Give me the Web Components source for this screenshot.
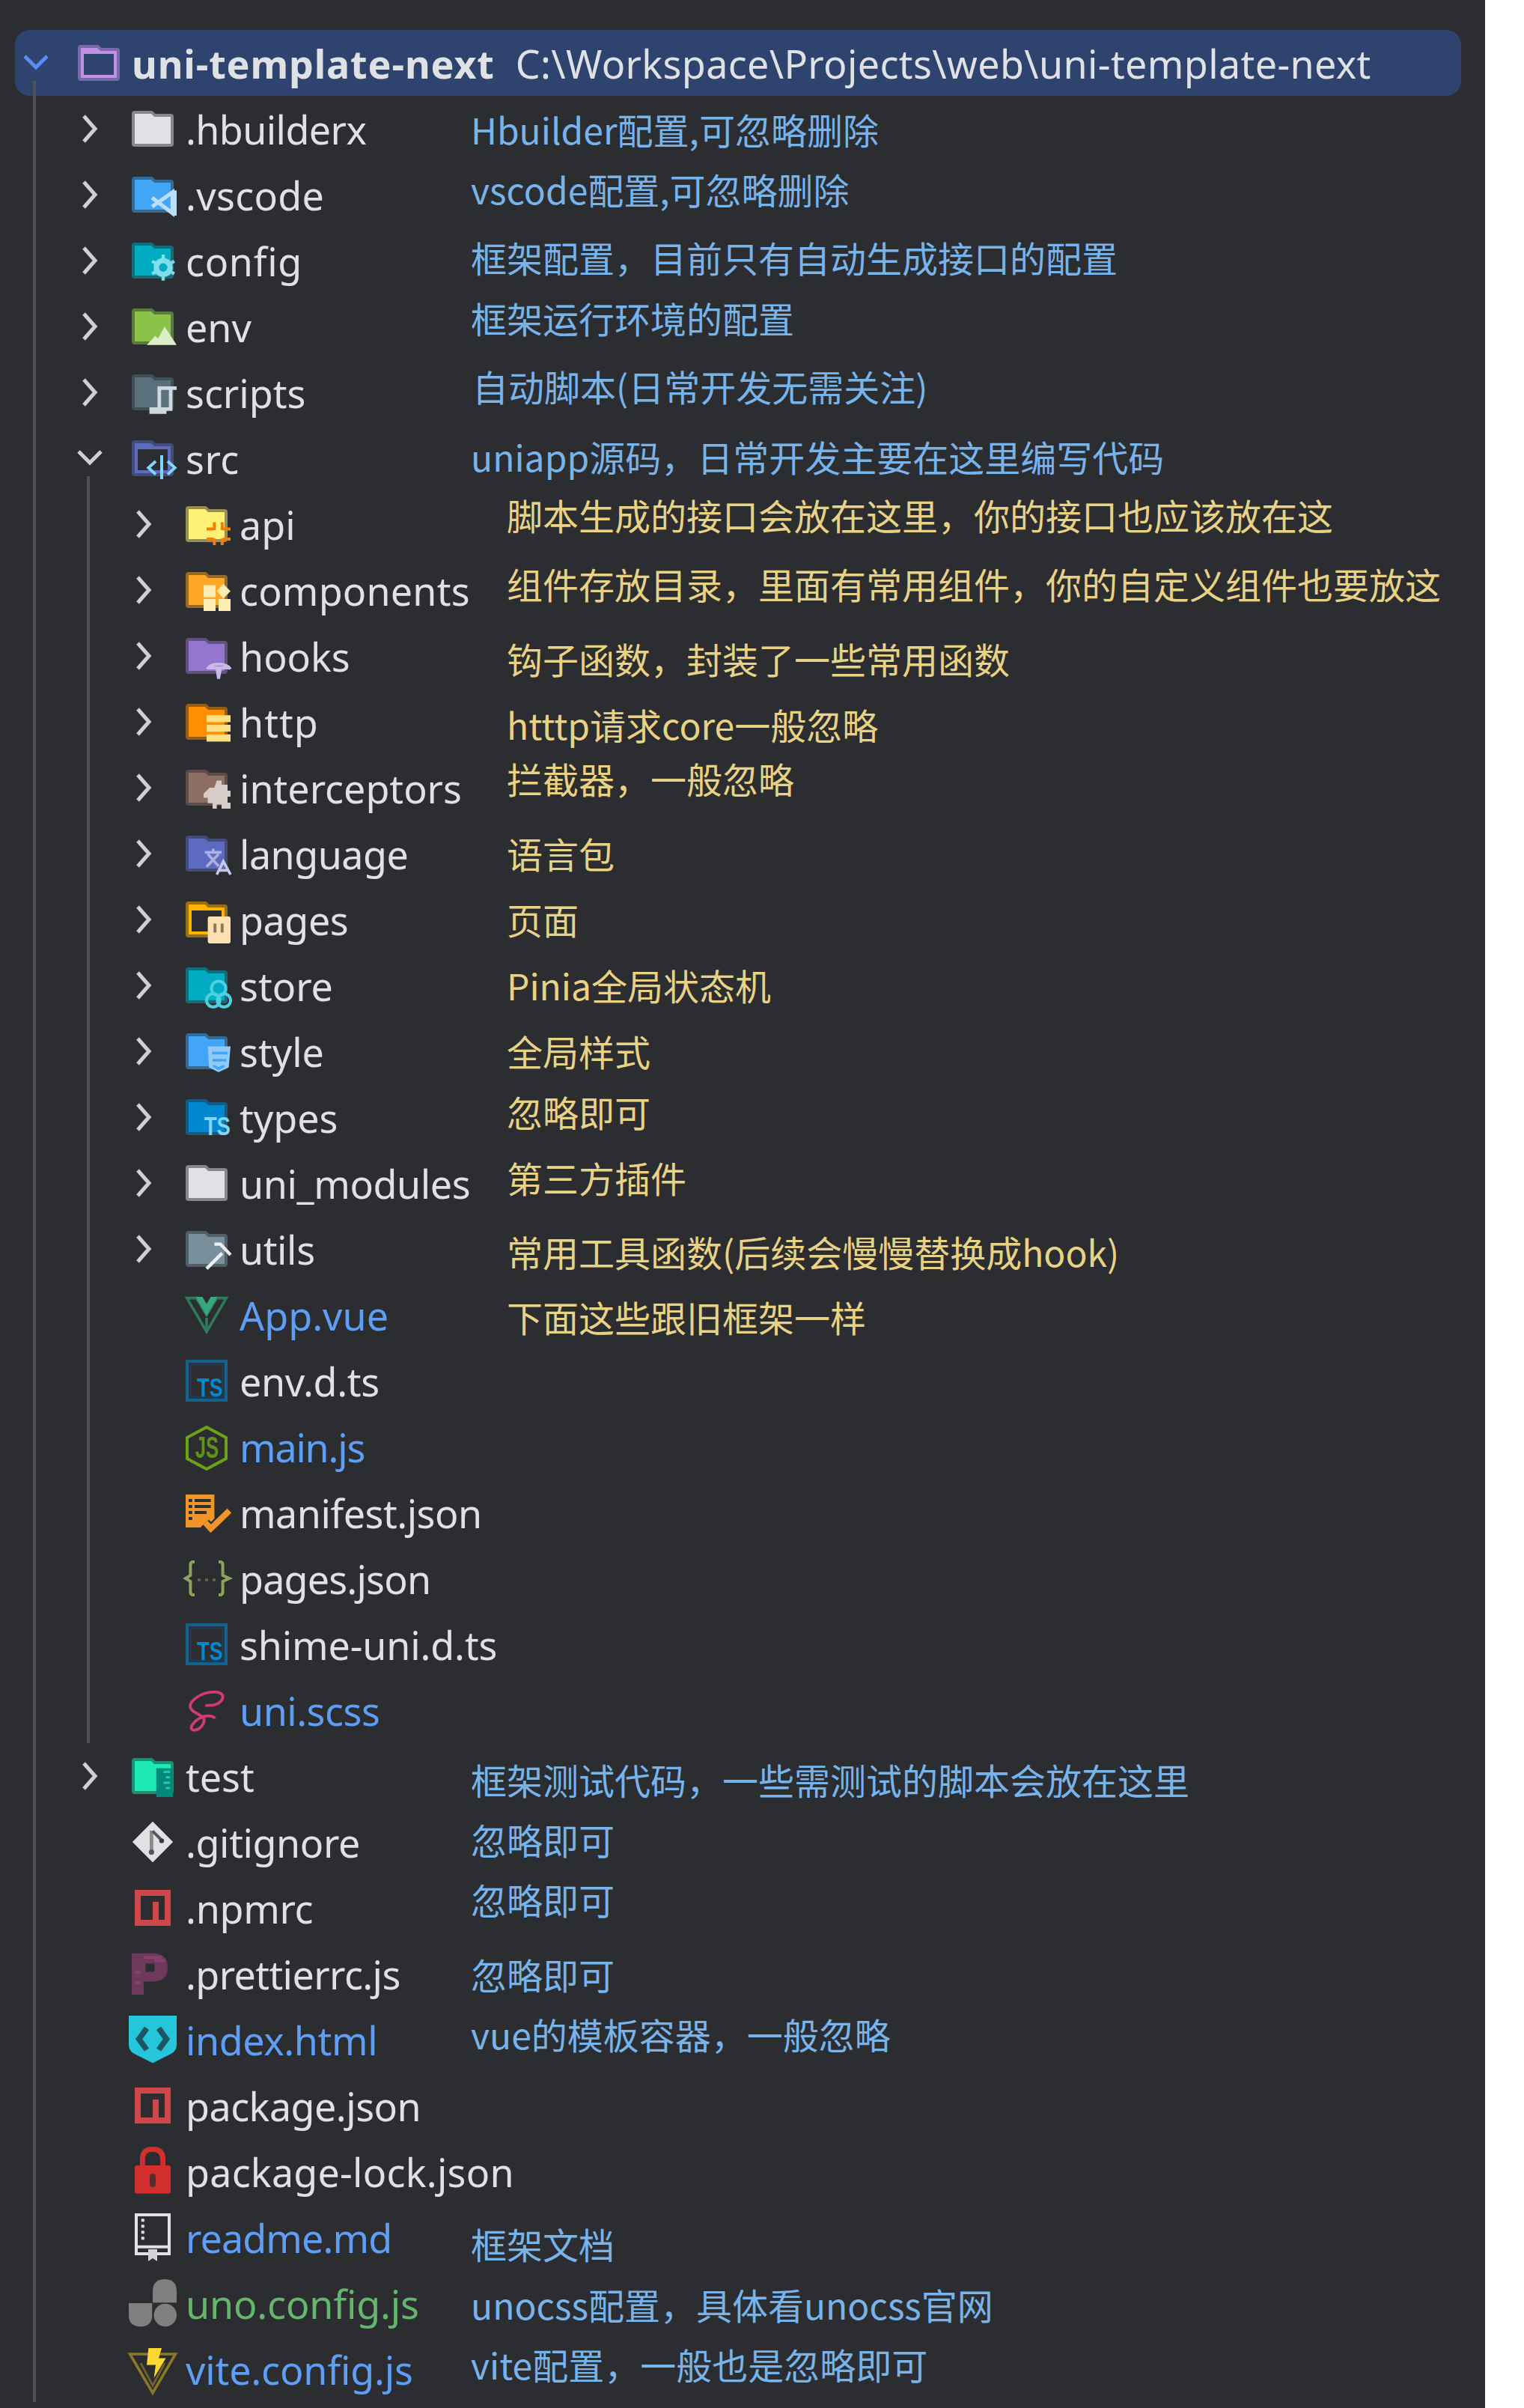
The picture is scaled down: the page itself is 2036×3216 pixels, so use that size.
<!DOCTYPE html>
<html>
<head>
<meta charset="utf-8">
<title>uni-template-next</title>
<style>
    html, body { margin: 0; background: #fff; }
</style>
</head>
<body>
<tree-panel>
    <tree-row selected level="0" chevron="open" icon="root"><b style="letter-spacing:.85px">uni-template-next</b><tree-path style="letter-spacing:.38px">C:\Workspace\Projects\web\uni-template-next</tree-path></tree-row>
    <tree-group style="--guide-x:44px">
        <tree-row level="1" chevron="closed" icon="hbuilderx" style="letter-spacing:-.6px">.hbuilderx<tree-note slot="note" x="629" dy="1">Hbuilder配置,可忽略删除</tree-note></tree-row>
        <tree-row level="1" chevron="closed" icon="vscode" style="letter-spacing:.3px">.vscode<tree-note slot="note" x="629" dy="-7">vscode配置,可忽略删除</tree-note></tree-row>
        <tree-row level="1" chevron="closed" icon="config" style="letter-spacing:.7px">config<tree-note slot="note" x="629" dy="-4">框架配置&#xFF0C;目前只有自动生成接口的配置</tree-note></tree-row>
        <tree-row level="1" chevron="closed" icon="env">env<tree-note slot="note" x="629" dy="-11">框架运行环境的配置</tree-note></tree-row>
        <tree-row level="1" chevron="closed" icon="scripts">scripts<tree-note slot="note" x="631" dy="-8">自动脚本(日常开发无需关注)</tree-note></tree-row>
        <tree-row level="1" chevron="open" icon="src" style="letter-spacing:.5px">src<tree-note slot="note" x="629" dy="-2">uniapp源码&#xFF0C;日常开发主要在这里编写代码</tree-note></tree-row>
        <tree-group style="--guide-x:116px">
            <tree-row level="2" chevron="closed" icon="api">api<tree-note slot="note" tone="yellow" x="677" dy="-12">脚本生成的接口会放在这里&#xFF0C;你的接口也应该放在这</tree-note></tree-row>
            <tree-row level="2" chevron="closed" icon="components" style="letter-spacing:.2px">components<tree-note slot="note" tone="yellow" x="677" dy="-8">组件存放目录&#xFF0C;里面有常用组件&#xFF0C;你的自定义组件也要放这</tree-note></tree-row>
            <tree-row level="2" chevron="closed" icon="hooks">hooks<tree-note slot="note" tone="yellow" x="677" dy="4">钩子函数&#xFF0C;封装了一些常用函数</tree-note></tree-row>
            <tree-row level="2" chevron="closed" icon="http" style="letter-spacing:1px">http<tree-note slot="note" tone="yellow" x="677" dy="4">htttp请求core一般忽略</tree-note></tree-row>
            <tree-row level="2" chevron="closed" icon="interceptors">interceptors<tree-note slot="note" tone="yellow" x="677" dy="-12">拦截器&#xFF0C;一般忽略</tree-note></tree-row>
            <tree-row level="2" chevron="closed" icon="language" style="letter-spacing:-.5px">language<tree-note slot="note" tone="yellow" x="677" dy="0">语言包</tree-note></tree-row>
            <tree-row level="2" chevron="closed" icon="pages" style="letter-spacing:-.4px">pages<tree-note slot="note" tone="yellow" x="677" dy="0">页面</tree-note></tree-row>
            <tree-row level="2" chevron="closed" icon="store">store<tree-note slot="note" tone="yellow" x="677" dy="0">Pinia全局状态机</tree-note></tree-row>
            <tree-row level="2" chevron="closed" icon="style">style<tree-note slot="note" tone="yellow" x="677" dy="0">全局样式</tree-note></tree-row>
            <tree-row level="2" chevron="closed" icon="types">types<tree-note slot="note" tone="yellow" x="677" dy="-7">忽略即可</tree-note></tree-row>
            <tree-row level="2" chevron="closed" icon="unimodules" style="letter-spacing:-.4px">uni_modules<tree-note slot="note" tone="yellow" x="677" dy="-7">第三方插件</tree-note></tree-row>
            <tree-row level="2" chevron="closed" icon="utils" style="letter-spacing:-.4px">utils<tree-note slot="note" tone="yellow" x="677" dy="4">常用工具函数(后续会慢慢替换成hook)</tree-note></tree-row>
            <tree-row level="2" icon="vue" status="modified">App.vue<tree-note slot="note" tone="yellow" x="677" dy="3">下面这些跟旧框架一样</tree-note></tree-row>
            <tree-row level="2" icon="ts" style="letter-spacing:-.3px">env.d.ts</tree-row>
            <tree-row level="2" icon="nodejs" status="modified" style="letter-spacing:-1.2px">main.js</tree-row>
            <tree-row level="2" icon="manifest" style="letter-spacing:-.5px">manifest.json</tree-row>
            <tree-row level="2" icon="json" style="letter-spacing:-.8px">pages.json</tree-row>
            <tree-row level="2" icon="ts" style="letter-spacing:-.15px">shime-uni.d.ts</tree-row>
            <tree-row level="2" icon="scss" status="modified" style="letter-spacing:-.5px">uni.scss</tree-row>
        </tree-group>
        <tree-row level="1" chevron="closed" icon="test">test<tree-note slot="note" x="629" dy="5">框架测试代码&#xFF0C;一些需测试的脚本会放在这里</tree-note></tree-row>
        <tree-row level="1" icon="git" style="letter-spacing:-.4px">.gitignore<tree-note slot="note" x="629" dy="-3">忽略即可</tree-note></tree-row>
        <tree-row level="1" icon="npm" style="letter-spacing:-.3px">.npmrc<tree-note slot="note" x="629" dy="-11">忽略即可</tree-note></tree-row>
        <tree-row level="1" icon="prettier" style="letter-spacing:-.6px">.prettierrc.js<tree-note slot="note" x="629" dy="1">忽略即可</tree-note></tree-row>
        <tree-row level="1" icon="html" status="modified" style="letter-spacing:-.4px">index.html<tree-note slot="note" x="629" dy="-7">vue的模板容器&#xFF0C;一般忽略</tree-note></tree-row>
        <tree-row level="1" icon="npm" style="letter-spacing:-.5px">package.json</tree-row>
        <tree-row level="1" icon="lock" style="letter-spacing:.25px">package-lock.json</tree-row>
        <tree-row level="1" icon="readme" status="modified" style="letter-spacing:-.9px">readme.md<tree-note slot="note" x="629" dy="9">框架文档</tree-note></tree-row>
        <tree-row level="1" icon="uno" status="added" style="letter-spacing:-.15px">uno.config.js<tree-note slot="note" x="629" dy="2">unocss配置&#xFF0C;具体看unocss官网</tree-note></tree-row>
        <tree-row level="1" icon="vite" status="modified" style="letter-spacing:-.15px">vite.config.js<tree-note slot="note" x="629" dy="-6">vite配置&#xFF0C;一般也是忽略即可</tree-note></tree-row>
    </tree-group>
</tree-panel>

<script>
    // folder drawn on a 14 cell grid, the rim is a half transparent stroke
    const FOLDER = 'M1 2H6.5L7.5 3H13V12H1Z';
    const folder = (c) => `<path d="${FOLDER}" fill="${c}" stroke="${c}" stroke-width="2" stroke-opacity=".5" stroke-linejoin="round"/>`;
    const hollowFolder = (c) => `<path d="${FOLDER}" fill="none" stroke="${c}" stroke-width="2" stroke-opacity=".5" stroke-linejoin="round"/>
        <path d="${FOLDER}M2 4V11H12V4Z" fill-rule="evenodd" fill="${c}"/>`;
    const SANS = 'font-family="Liberation Sans, sans-serif"';
    const tsFile = `<rect x=".5" y=".5" width="13" height="13" fill="none" stroke="#14608f"/>
        <rect x="1.5" y="1.5" width="11" height="11" fill="none" stroke="#1e3c4f" stroke-width=".7"/>
        <text x="3.8" y="12.2" ${SANS} font-weight="700" font-size="8.6" textLength="8.6" lengthAdjust="spacingAndGlyphs" fill="#0288d1">TS</text>`;
    const npm = `<path d="M1 1H13V13H1ZM3 3V11H7V5H9V11H11V3Z" fill-rule="evenodd" fill="#d0484c"/>`;

    const ICONS = {
        root: hollowFolder('#c08fe6'),
        hbuilderx: folder('#dfe1e5'),
        unimodules: folder('#dfe1e5'),
        vscode: folder('#42a5f5') + `<g fill="none" stroke="#bbdefb">
            <path d="M6.8 8L13.6 13.2V6.2L6.8 11" stroke-width="1.3"/>
            <path d="M14.2 5.6V14" stroke-width="1.6"/></g>`,
        config: folder('#00acc1') + `<circle cx="10.5" cy="9.3" r="2.3" fill="#00acc1" stroke="#80deea" stroke-width="1.8"/>
            <path d="M10.5 5V13.7M6.8 7.2L14.2 11.4M6.8 11.4L14.2 7.2" stroke="#80deea" stroke-width="1.1" stroke-dasharray="1.3 6.1"/>`,
        env: folder('#8bc34a') + `<path d="M5 13.2L7.8 10.2L8.8 11L11 7L15 13.2Z" fill="#dcedc8"/>`,
        scripts: folder('#5a717d') + `<g fill="none" stroke="#cfd8dc" stroke-width="1.2">
            <path d="M15 5.6H9.2V12.4"/><path d="M13 6V12.6H6.5V13.6H11.6"/></g>`,
        src: hollowFolder('#5c6bc0') + `<g fill="none" stroke="#81d4fa">
            <path d="M8 8L5.6 10.2L8 12.4" /><path d="M12 8L14.4 10.2L12 12.4"/><path d="M10 6V14"/></g>`,
        api: folder('#fff176') + `<path d="M7 8.6H9.4M12.4 8.6H15M7 12H9.4M12.4 12H15M9.6 6.4V9M12.2 6.4V9M9.6 11.8V14M12.2 11.8V14" stroke="#f57c00" stroke-width="1"/>`,
        components: folder('#ffa726') + `<g fill="#ffecb3">
            <rect x="6" y="5.4" width="4" height="4"/><path d="M12.6 5L15 7.4L12.6 9.8L10.4 7.4Z"/>
            <rect x="6" y="10" width="4" height="4"/><rect x="11" y="10" width="4" height="4"/></g>`,
        hooks: folder('#9575cd') + `<path d="M7.2 11.4C8.4 9.2 13.6 9.2 15 11.4M7.6 11H14.6M10.5 11.2L11 14.6L11.6 11.2" fill="none" stroke="#c9b8ea" stroke-width="1"/>`,
        http: folder('#ff8f00') + `<g fill="#ffe082"><rect x="7" y="4.8" width="8" height="2.3"/><rect x="7" y="8" width="8" height="2.3"/><rect x="7" y="11.2" width="8" height="2.4"/></g>`,
        interceptors: folder('#8d6e63') + `<path d="M10.4 4.6H12V6H14V8H15V10H14V12H15V14H12V12.6H10.4V14H9V12.2H7.4V10.4H6V9L8 7H9.6Z" fill="#d7ccc8"/>`,
        language: folder('#5c6bc0') + `<g fill="none" stroke="#aab2e2" stroke-width=".9">
            <path d="M6.4 6.6H12M9.2 5.4V6.6M7.4 7.2L11 11.2M11 7.2L7 11.4"/>
            <path d="M10.4 14L12.6 9.6L15 14M11.4 12.6H14" stroke="#c5cae9"/></g>`,
        pages: hollowFolder('#ffb300') + `<rect x="7.4" y="6" width="7.6" height="9" rx=".6" fill="#ffe0b2"/>
            <path d="M9.8 8.4V11.4M12.2 8.4V11.4" stroke="#8d7a5c" stroke-width="1"/>`,
        store: folder('#00acc1') + `<g fill="none" stroke="#4dd0e1" stroke-width="1">
            <circle cx="11" cy="8" r="2.4"/><circle cx="9.2" cy="12" r="2.2"/><circle cx="12.8" cy="12" r="2.2"/></g>`,
        style: folder('#42a5f5') + `<path d="M7.4 5.4H15L14.4 12.4L11 14L7.8 12.4Z" fill="#90caf9"/>
            <path d="M8.8 7.6H14M9 10H13.6M9.6 11.6V12L11 12.8L12.6 12V11.6" fill="none" stroke="#42a5f5" stroke-width=".9"/>`,
        types: folder('#0288d1') + `<text x="6.2" y="13" ${SANS} font-weight="700" font-size="8.8" textLength="8.8" lengthAdjust="spacingAndGlyphs" fill="#81d4fa">TS</text>`,
        utils: folder('#78909c') + `<g fill="none" stroke="#eceff1" stroke-width="1.1"><path d="M7 13.6L12.2 8.4"/><path d="M9.6 5.4H11.6L15 9"/></g>`,
        vue: `<path d="M.4 1.4H3.6L7 7L10.4 1.4H13.6L7 12.6Z" fill="none" stroke="#2f7a5c" stroke-width=".9"/>
            <path d="M3.4 1H5.6L7 3.4L8.4 1H10.6L7 7.4Z" fill="#38a97d"/><path d="M7 8V13" stroke="#2f7a5c" stroke-width=".9"/>`,
        ts: tsFile,
        nodejs: `<path d="M7 .5L13.5 4V11L7 14.5L.5 11V4Z" fill="none" stroke="#6ca214"/>
            <text x="3.2" y="10.8" ${SANS} font-weight="700" font-size="10" textLength="7.8" lengthAdjust="spacingAndGlyphs" fill="#5f9216">JS</text>`,
        manifest: `<rect x="0" y="1" width="9.6" height="11" fill="#f0952a"/>
            <path d="M1 3H2.2M3 3H8.4M1 5H2.2M3 5H8.4M1 7H2.2M3 7H7M1 9H2.2" stroke="#2b2d30"/>
            <path d="M6.4 10.6L8.4 12.8L14.4 6.8" fill="none" stroke="#2b2d30" stroke-width="3.6"/>
            <path d="M6.6 10.4L8.4 12.4L14.6 6.4" fill="none" stroke="#f0952a" stroke-width="2"/>`,
        json: `<g fill="none" stroke="#8da25a" stroke-width="1">
            <path d="M3 1.5H2.4Q1.6 1.5 1.6 2.6V6L0 7L1.6 8V11.4Q1.6 12.5 2.4 12.5H3"/>
            <path d="M11 1.5H11.6Q12.4 1.5 12.4 2.6V6L14.6 7L12.4 8V11.4Q12.4 12.5 11.6 12.5H11"/></g>
            <path d="M4 7.5H10" stroke="#5f6a48" stroke-width=".9" stroke-dasharray="1 1.5"/>`,
        scss: `<path d="M12.4 2.8C12.8 .4 7.4 .2 3.6 2.8C.8 4.8 1 6.4 3.2 7.8L6 9.4C6.8 11.6 4.4 14 2.4 13.6C1 13.2 2.4 10.6 5.8 9.2C7.6 8.6 9.4 9 9.8 9.8M12.4 2.8C12 4.8 9.6 5.6 6.6 5.4" fill="none" stroke="#d43a70" stroke-width=".95"/>`,
        test: folder('#1de9b6') + `<rect x="8.2" y="4.4" width="5.6" height="9.6" fill="#00897b"/>
            <path d="M10.6 5.6H12.8M11.4 7.4H12.8M10.6 9.2H12.8M11.4 11H12.8" stroke="#26c6a6" stroke-width=".8"/>`,
        git: `<path d="M7 .2L13.8 7L7 13.8L.2 7Z" fill="#dfe1e5"/>
            <path d="M6.6 3.2V11" stroke="#8a8a8a" stroke-width="1.2"/><path d="M7 3.4L9.8 6.2" stroke="#55575b" stroke-width="1"/>
            <circle cx="10" cy="6.6" r=".8" fill="#3a3c40"/><circle cx="6.6" cy="10.4" r=".9" fill="#55575b"/>`,
        npm: npm,
        prettier: `<path d="M0 .2H7Q12 .2 12 5Q12 9.6 7 9.6H4V14H0ZM4.6 3.6V6.4H7.6V3.6Z" fill-rule="evenodd" fill="#6e3a5c"/>
            <path d="M4 1.6H10M7.5 2.6H11M1 6.5H3M1 10H3" stroke="#8a3f6c" stroke-width=".9"/>`,
        html: `<path d="M-1 -1H15V8.6Q15 10.8 13 11.8L7 14.8L1 11.8Q-1 10.8 -1 8.6Z" fill="#26c6da"/>
            <path d="M5 3.2L2.4 6.8L5 10.4M9 3.2L11.6 6.8L9 10.4" fill="none" stroke="#1d5566" stroke-width="1.9"/>`,
        lock: `<path d="M3.6 6V3Q3.6 -.4 7 -.4Q10.4 -.4 10.4 3V6" fill="none" stroke="#d32f2f" stroke-width="1.7"/>
            <rect x="1" y="5" width="12" height="9.4" rx=".6" fill="#d32f2f"/><rect x="6" y="7.8" width="2" height="4.4" rx=".8" fill="#2b2d30" opacity=".75"/>`,
        readme: `<path d="M1.5 -.5H12.5V12.5H1.5Z" fill="none" stroke="#dfe1e5"/><path d="M1.5 10.2H12.5" stroke="#dfe1e5"/>
            <path d="M3.7 .8V8.6" stroke="#dfe1e5" stroke-width="1" stroke-dasharray="1 1"/>
            <path d="M5.5 11H8.5V15L7 14L5.5 15Z" fill="#d0d2d6"/>`,
        uno: `<g fill="#808080"><path d="M7 3Q7 -1 11 -1Q15 -1 15 3V6.8H7Z"/><path d="M-1 7H6.8V11Q6.8 14.8 3 14.8Q-1 14.8 -1 11Z"/><circle cx="11.2" cy="11" r="3.8"/></g>`,
        vite: `<path d="M-.6 2L14.6 2L7 15Z" fill="none" stroke="#8a7828" stroke-width=".9"/>
            <path d="M3 5L7 12.5L11 5" fill="none" stroke="#6e6228" stroke-width=".7"/>
            <path d="M5.6 0H10L9 3.4H11.4L7.4 10L8 5.6H5Z" fill="#fdd835"/>`
    };

    class FileIcon extends HTMLElement {
        connectedCallback() {
            const name = this.getAttribute('name');
            this.attachShadow({mode: 'open'});
            this.shadowRoot.innerHTML = `
                <style>
                :host { display: block; width: 56px; height: 56px; flex: none; letter-spacing: 0; }
                svg { display: block; overflow: visible; width: 56px; height: 56px; }
                </style>
                <svg viewBox="0 0 14 14">${ICONS[name] || ''}</svg>
            `;
        }
    }
    customElements.define('file-icon', FileIcon);

    class TreeChevron extends HTMLElement {
        connectedCallback() {
            const open = this.getAttribute('dir') === 'open';
            const points = open ? '5,11 20,26 35,11' : '12,3 27,20 12,37';
            this.attachShadow({mode: 'open'});
            this.shadowRoot.innerHTML = `
                <style>
                :host { display: block; width: 40px; height: 40px; flex: none; }
                svg { display: block; }
                polyline { fill: none; stroke: var(--chevron-color, #cdcfd4); stroke-width: 5; }
                </style>
                <svg width="40" height="40" viewBox="0 0 40 40"><polyline points="${points}"/></svg>
            `;
        }
    }
    customElements.define('tree-chevron', TreeChevron);

    class TreeNote extends HTMLElement {
        connectedCallback() {
            const x = this.getAttribute('x') || 629;
            const dy = this.getAttribute('dy') || 0;
            this.attachShadow({mode: 'open'});
            this.shadowRoot.innerHTML = `
                <style>
                :host {
                    position: absolute;
                    left: ${x}px;
                    top: calc(50% + ${dy}px);
                    transform: translateY(-50%);
                    font: 400 48px/1.2 "Noto Sans CJK SC", "Noto Sans", sans-serif;
                    letter-spacing: 0;
                    color: #78b3ea;
                    white-space: nowrap;
                }
                :host([tone="yellow"]) { color: #e8d285; }
                </style>
                <slot></slot>
            `;
        }
    }
    customElements.define('tree-note', TreeNote);

    class TreePath extends HTMLElement {
        constructor() {
            super();
            this.attachShadow({mode: 'open'});
            this.shadowRoot.innerHTML = `
                <style>
                :host { display: inline; margin-left: 14px; font-weight: 400; }
                </style>
                <slot></slot>
            `;
        }
    }
    customElements.define('tree-path', TreePath);

    class TreeRow extends HTMLElement {
        connectedCallback() {
            const level = Number(this.getAttribute('level') || 0);
            const chevron = this.getAttribute('chevron');
            const icon = this.getAttribute('icon');
            this.attachShadow({mode: 'open'});
            this.shadowRoot.innerHTML = `
                <style>
                :host {
                    display: flex;
                    align-items: center;
                    position: relative;
                    height: 88px;
                    padding-left: ${28 + 72 * level}px;
                    font: 400 52px "Noto Sans", "Noto Sans CJK SC", sans-serif;
                    color: #dfe1e5;
                    white-space: nowrap;
                }
                :host([status="modified"]) { color: #5f9ef5; }
                :host([status="added"]) { color: #66b56c; }
                :host([selected]) {
                    margin: 0 32px 0 20px;
                    padding-left: 8px;
                    border-radius: 20px;
                    background: #2e436e;
                    --chevron-color: #5b8def;
                }
                .slot { width: 40px; flex: none; margin-right: 36px; }
                .name { margin-left: 16px; }
                </style>
                <div class="slot">${chevron ? `<tree-chevron dir="${chevron}"></tree-chevron>` : ''}</div>
                <file-icon name="${icon}"></file-icon>
                <span class="name"><slot></slot></span>
                <slot name="note"></slot>
            `;
        }
    }
    customElements.define('tree-row', TreeRow);

    class TreeGroup extends HTMLElement {
        constructor() {
            super();
            this.attachShadow({mode: 'open'});
            this.shadowRoot.innerHTML = `
                <style>
                :host { display: block; position: relative; }
                :host::before {
                    content: "";
                    position: absolute;
                    left: var(--guide-x);
                    top: -20px;
                    bottom: 0;
                    width: 4px;
                    background: #4e5157;
                }
                </style>
                <slot></slot>
            `;
        }
    }
    customElements.define('tree-group', TreeGroup);

    class TreePanel extends HTMLElement {
        constructor() {
            super();
            this.attachShadow({mode: 'open'});
            this.shadowRoot.innerHTML = `
                <style>
                :host {
                    display: block;
                    box-sizing: border-box;
                    width: 1984px;
                    height: 3216px;
                    padding-top: 40px;
                    background: #2b2d30;
                    overflow: hidden;
                }
                </style>
                <slot></slot>
            `;
        }
    }
    customElements.define('tree-panel', TreePanel);
</script>
</body>
</html>
